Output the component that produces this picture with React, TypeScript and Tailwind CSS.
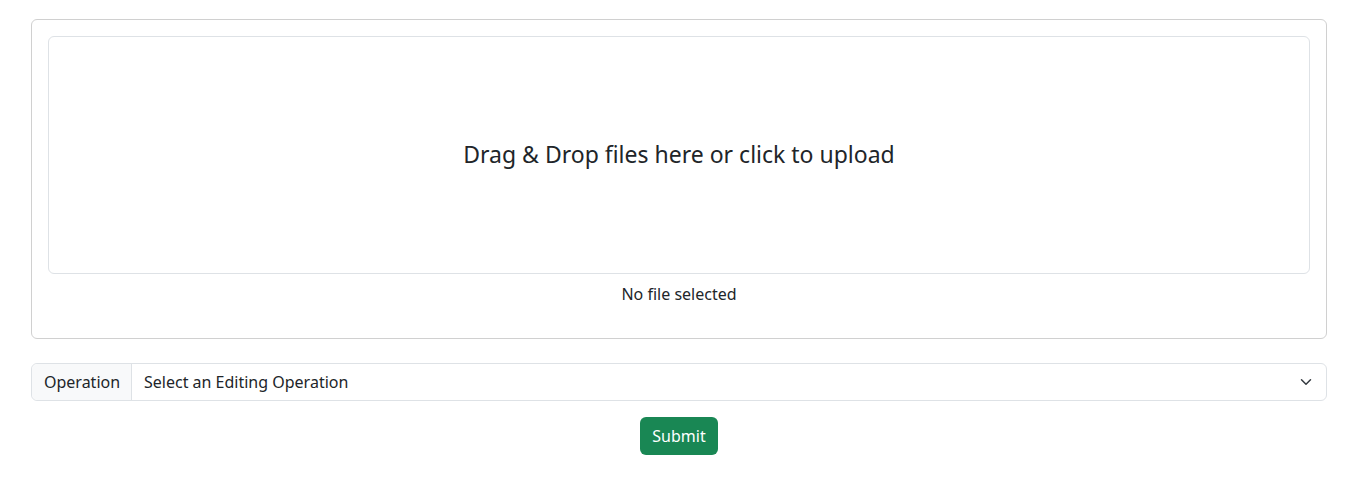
import React, { useState } from 'react';

export default function App() {
  const [fileName] = useState<string | null>(null);

  return (
    <div className="min-h-screen bg-white text-[#212529] font-['Noto_Sans',sans-serif] pt-[19px] pl-[31px] pr-[37px]">
      {/* Upload card */}
      <div className="border border-[#d0d0d0] rounded-md p-4 mb-6">
        <div className="h-[238px] border border-[#dee2e6] rounded-md flex items-center justify-center pb-[2px] cursor-pointer">
          <span className="text-[23px]">Drag &amp; Drop files here or click to upload</span>
        </div>
        <p className="mt-2 mb-4 text-center text-base leading-6">{fileName ?? 'No file selected'}</p>
      </div>

      {/* Operation select */}
      <div className="flex h-[38px] border border-[#dee2e6] rounded-md mb-4 text-base">
        <span className="flex items-center px-3 bg-[#f8f9fa] border-r border-[#dee2e6] rounded-l-md w-[100px]">Operation</span>
        <div className="relative flex-1 flex items-center pl-3 pr-10">
          <span>Select an Editing Operation</span>
          <svg className="absolute right-3 top-1/2 -translate-y-1/2" width="16" height="12" viewBox="0 0 16 16" fill="none">
            <path d="m2 5 6 6 6-6" stroke="#343a40" strokeWidth="2" strokeLinecap="round" strokeLinejoin="round" />
          </svg>
        </div>
      </div>

      <div className="flex justify-center">
        <button className="h-[38px] w-[78px] rounded-md bg-[#198754] text-white text-base">Submit</button>
      </div>
    </div>
  );
}
